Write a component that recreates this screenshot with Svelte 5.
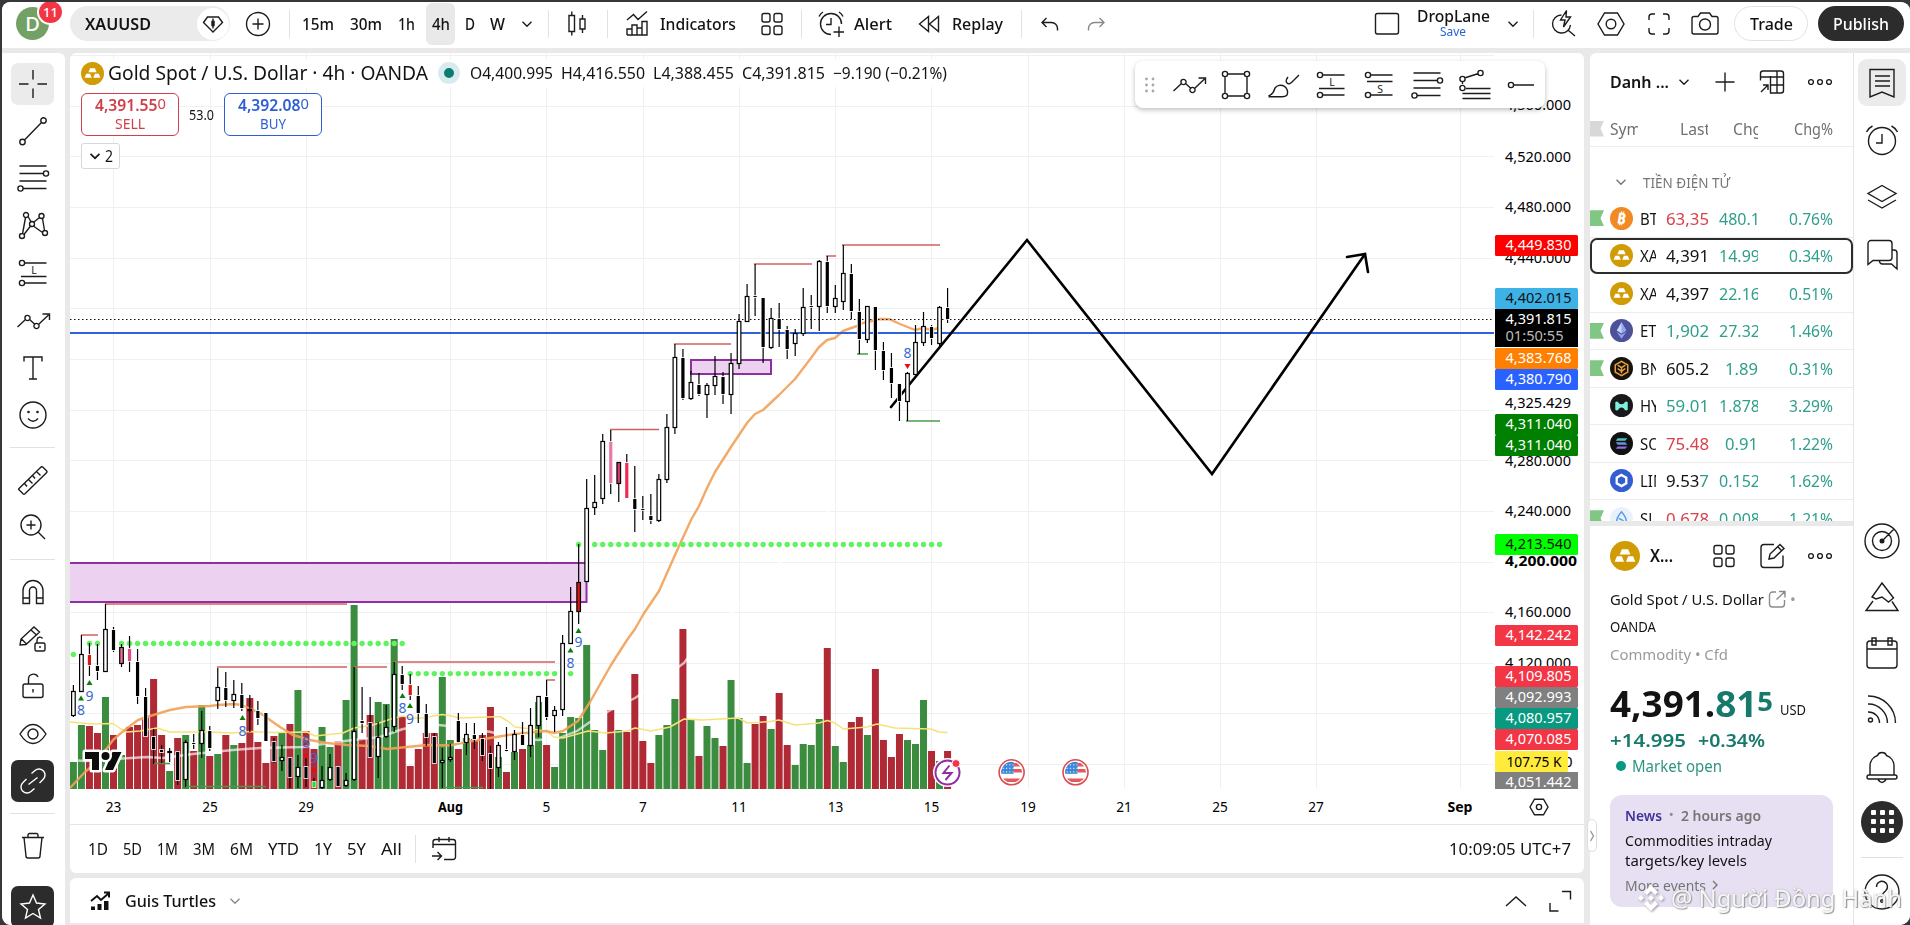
<script>
  // squeeze or stretch a label to the given width
  function fit(node, width) {
    const natural = node.getBoundingClientRect().width;
    if (!natural) return;
    node.style.transform = `scaleX(${width / natural})`;
    node.style.marginRight = `${width - natural}px`;
  }

  const c = (x, y, r) => `M${x - r} ${y}a${r} ${r} 0 1 0 ${2 * r} 0a${r} ${r} 0 1 0 ${-2 * r} 0`;
  const rr = (x, y, w, h, r) =>
    `M${x + r} ${y}h${w - 2 * r}a${r} ${r} 0 0 1 ${r} ${r}v${h - 2 * r}a${r} ${r} 0 0 1 ${-r} ${r}h${-(w - 2 * r)}a${r} ${r} 0 0 1 ${-r} ${-r}v${-(h - 2 * r)}a${r} ${r} 0 0 1 ${r} ${-r}z`;

  // all icons are centred on 0,0
  const icons = {
    plusCircle: c(0, 0, 11.5) + 'M-5.5 0h11M0-5.5v11',
    diamond: 'M-5.5-7h11l4 5.5-9.5 9.5-9.5-9.5z M0-5.5v10 M-1-2.5h2v4h-2z',
    chev: 'M-4.5-2.2l4.5 4.4 4.5-4.4',
    up: 'M-10 5l10-9 10 9',
    candles: 'M-8-8.5h5.5v16h-5.5zM-5.2-12.5v4M-5.2 7.5v4M3-5h5v10h-5zM5.5-9v4M5.5 5v4',
    indicators: 'M-10-4l6.5-5.5 4.5 5 9-8M-10 11V5h5M-5 11V1h5v10M0 4h5M5 11V-2.500h5v13.500zM-10 11h20M5 4v7',
    grid: rr(-10, -10.5, 8, 8.5, 2) + rr(2, -10.5, 8, 8.5, 2) + rr(-10, 2, 8, 8.5, 2) + rr(2, 2, 8, 8.5, 2),
    alert: 'M0 10.500A10.500 10.500 0 1 1 10.500 0M0-6v6.500h-5M8 2.500v10.500M2.500 8h10.500M-12-7.500q1.500-3 4-4.500M12-7.500q-1.500-3-4-4.500',
    replay: 'M-.5-7.500v15l-9-7.500zM9.500-7.500v15l-9-7.500z',
    undo: 'M-3.500-6l-4.500 4.500 4.500 4.500M-8-1.500H1.500a6 6 0 0 1 6 6v2',
    redo: 'M3.500-6l4.500 4.500-4.500 4.500M8-1.500H-1.500a6 6 0 0 0-6 6v2',
    square: rr(-11.5, -10.5, 23, 20.5, 2),
    search: 'M-1.500-9a9 9 0 1 0 9 10M5.500 6.500l6.500 5.500M3.500-13.500l-6 9.500h4.500l-1.500 7 7-10h-4.500z',
    hex: 'M-6.500-11h13l6.500 11-6.500 11h-13l-6.500-11z' + c(0, 0, 4.8),
    hexSmall: 'M-4.500-7.800h9l4.500 7.800-4.500 7.800h-9l-4.500-7.800z' + c(0, 0, 2.6),
    full: 'M-10-4v-3a3 3 0 0 1 3-3h3M4-10h3a3 3 0 0 1 3 3v3M10 4v3a3 3 0 0 1-3 3h-3M-4 10h-3a3 3 0 0 1-3-3v-3',
    camera: 'M-13-5.500a2 2 0 0 1 2-2h4l2.500-3.500h9l2.500 3.500h4a2 2 0 0 1 2 2v13.500a2 2 0 0 1-2 2h-22a2 2 0 0 1-2-2z' + c(0, 0.5, 5.5),
    plus: 'M-9.500 0h19M0-9.500v19',
    table: 'M-11.500-1.500v-7a2.500 2.500 0 0 1 2.500-2.500h18a2.500 2.500 0 0 1 2.500 2.500v17a2.500 2.500 0 0 1-2.500 2.500h-10.500v-17M-11.500-5h23M5-11v22M-1.500 3h13M-11 10l7-7M-9 3h5v5',
    dots: c(-9, 0, 2.4) + c(0, 0, 2.4) + c(9, 0, 2.4),
    cross: 'M0-14v9.500M0 4.500v9.500M-14 0h9.500M4.500 0h9.500',
    trend: c(-10.5, 11, 2.7) + c(10.5, -10.5, 2.7) + 'M-8.500 9l17-17.500',
    fib: 'M-13.500-12h27M-13.500-4.500h24M-13.500 3h27M-10 10.500h23.500' + c(13, -4.5, 2.6) + c(-12.5, 10.5, 2.6),
    pattern: 'M-10.500 8l3-16.500M-5-9.500l3.500 6M1-4l5.500-4.500M9.500-7.500l2 12M-9 8.500l6.500-8.500M1 .5l8.500 6' + c(-11, 10, 2.5) + c(-7, -11, 2.5) + c(-1, -2, 2.5) + c(8.5, -10, 2.5) + c(12, 7, 2.5),
    long: 'M-8.500-10h22M-12 3.500h25.500M-8.500 10h22' + c(-11, -10, 2.6) + c(-11, 10, 2.6),
    short: 'M-8.500-10h22M-12-3.500h25.500M-8.500 10h22' + c(-11, -10, 2.6) + c(-11, 10, 2.6),
    path: 'M-15.500 6l8-7.500M-3.500-1.500l5 4.500M6 3l9.500-9M9.500-7h7v6' + c(-5.5, -3, 2.6) + c(3.5, 5, 2.6),
    text: 'M-9-6.500v-4.500h18v4.500M0-11v22M-4 11h8',
    smile: c(0, 0, 13) + 'M-5 3.500q5 5.500 10 0',
    ruler: 'M-14 8.500l22-21.500q1-.5 2 .3l3.500 3.500q1 1 0 2l-21.500 21q-1 .8-2 0l-4-4q-.8-.6 0-1.300zM-8.500 3.500l2.500 3M-4.500-.5l4 4M-.5-4.500l2.500 3M3.500-8.500l4 4',
    zoom: c(-2, -2, 10) + 'M5.500 5.500l6.500 6.500M-6.500-2h9M-2-6.500v9',
    magnet: 'M-10 11.500v-13a10 10 0 0 1 20 0v13h-6.500v-13a3.500 3.500 0 0 0-7 0v13zM-10 6h6.500M3.500 6h6.500',
    pencilLock: 'M-13 6l1-6 13-12 5.500 5-13.500 12.500zM-2-9l5.500 5M-11.500 0l5 5' + rr(2, 4, 10, 8, 1.5) + 'M4 4v-3a3 3 0 0 1 5.500-1.500M7 7v2',
    lock: rr(-10, -2, 20, 13.5, 2) + 'M-4.500-2v-4.500a5 5 0 0 1 9.500-2.500M0 3v3.500',
    eye: 'M-13 0q6-9.500 13-9.500t13 9.500q-6 9.500-13 9.500t-13-9.500z' + c(0, 0, 5),
    link: 'M-4.500 3.500l9-7M-1.500-7.500l3.500-3a6 6 0 0 1 8 9l-3.500 3.500M1.500 7.500l-3.500 3a6 6 0 0 1-8-9l3.500-3.500',
    trash: 'M-11-8.500h22M-5-8.500v-2.500a1.500 1.500 0 0 1 1.500-1.500h7a1.500 1.500 0 0 1 1.500 1.500v2.500M-9-8.500l2 18.500a2 2 0 0 0 2 2h10a2 2 0 0 0 2-2l2-18.500',
    star: 'M0-12l3.500 8 8.500 1-6.500 5.500 2 8.500-7.500-4.500-7.500 4.500 2-8.500-6.500-5.500 8.500-1z',
    rect: 'M-8-11h16M-8 11h16M-11-8v16M11-8v16' + c(-11, -11, 2.6) + c(11, -11, 2.6) + c(-11, 11, 2.6) + c(11, 11, 2.6),
    brush: 'M-15.500 11q5-2 6.500-8a7 7 0 0 1 12 7q-1.500 1.800-5 1.800h-13.500M15-10l-7 7q-3 3-5 1t1-6',
    fibExt: 'M-11.500-4v3M-9.500-7l14-4.500M-8 3.500h24.500M-11.500 8.500h28M-11.500 13.500h28' + c(-11.5, -6, 2.6) + c(6.5, -12, 2.6) + c(-11.5, 3, 2.6),
    hray: c(-11, 0, 2.6) + 'M-8 0h20',
    bookmark: 'M-12-13.500h24v27.500l-12-5-12 5zM-7-7h15M-7-2h15M-7 3h15',
    clock: c(0, 1, 13.5) + 'M0-6v9h-6M-15.500-8q2-4 6-6M15.500-8q-2-4-6-6',
    layers: 'M0-11.500l14 8-14 8-14-8zM-14 3l14 8 14-8',
    chat: 'M-14 10.500v-21a3 3 0 0 1 3-3h18a3 3 0 0 1 3 3v14a3 3 0 0 1-3 3h-16zM10-4h2a3 3 0 0 1 3 3v16l-5.500-5h-9a3 3 0 0 1-3-3.500',
    radar: c(0, 0, 17) + c(0, 0, 9.5) + 'M0 0l12-12M-1-1h2v2h-2z',
    mountain: 'M0-14l11.500 15-5 4-6.500-5-6 2-4-2zM-9 4l-7 9.500h32l-6-9',
    calendar: rr(-15, -12, 30, 27, 3) + 'M-15-4h30M-10-15h4v7h-4zM6-15h4v7h-4z',
    rss: c(-11.5, 11, 2) + 'M-14 3a11 11 0 0 1 11.500 11M-14-5a19 19 0 0 1 19.500 19M-14-13a27 27 0 0 1 27.500 27',
    bell: 'M-12 9v-9a11 11 0 0 1 7.500-10.500q1-3 4.500-3t4.500 3a11 11 0 0 1 7.500 10.500v9' + rr(-15, 9, 30, 4, 2) + 'M-4 13.500q4 6 8 0',
    help: c(0, 0, 17) + 'M-5.500-5a5.500 5.500 0 1 1 9 4q-3.500 2.500-3.500 6' + c(0, 9, 1.3),
    edit: 'M2-11.500h-10a3 3 0 0 0-3 3v17a3 3 0 0 0 3 3h16a3 3 0 0 0 3-3v-9M-3 3l1-5 10-9.500 4 4-10 9.500zM6-9l4 4',
    external: 'M-1-7h-3.500a3 3 0 0 0-3 3v9a3 3 0 0 0 3 3h9a3 3 0 0 0 3-3v-4M2-7.500h6v6M8-7.500l-8.500 8',
    goto: 'M-11-1v-6a2.500 2.500 0 0 1 2.500-2.500h17.500a2.500 2.500 0 0 1 2.500 2.500v15a2.500 2.500 0 0 1-2.500 2.500h-9M-11-4.500h22.500M-5-12v5M5-12v5M-12 7h9M-6.500 3l4 4-4 4',
    expand: 'M2-9.500h8.500v8M-10 2v8h8.500',
    handle: 'M-1.500-5l3 5-3 5'
  };

  const leftTop = ['trend', 'fib', 'pattern', 'long', 'path', 'text', 'smile'];
  const floatTools = ['path', 'rect', 'brush', 'long', 'short', 'fib', 'fibExt', 'hray'];
  const ranges = [['1D', 20], ['5D', 19], ['1M', 21], ['3M', 22], ['6M', 23], ['YTD', 31], ['1Y', 18], ['5Y', 19], ['All', 21]];

  const coins = [
    { sym: 'BTC', last: '63,35', chg: '480.1', pct: '0.76%', dir: 'red', coin: 'btc', flag: true },
    { sym: 'XAU', last: '4,391', chg: '14.99', pct: '0.34%', dir: '', coin: 'gold', active: true },
    { sym: 'XAU', last: '4,397', chg: '22.16', pct: '0.51%', dir: '', coin: 'gold' },
    { sym: 'ETH', last: '1,902', chg: '27.32', pct: '1.46%', dir: 'green', coin: 'eth', flag: true },
    { sym: 'BNB', last: '605.2', chg: '1.89', pct: '0.31%', dir: '', coin: 'bnb', flag: true },
    { sym: 'HYP', last: '59.01', chg: '1.878', pct: '3.29%', dir: 'green', coin: 'hype' },
    { sym: 'SOL', last: '75.48', chg: '0.91', pct: '1.22%', dir: 'red', coin: 'sol' },
    { sym: 'LINK', last: '9.53', tail: '7', chg: '0.152', pct: '1.62%', dir: '', coin: 'link' },
    { sym: 'SUI', last: '0.678', chg: '0.008', pct: '1.21%', dir: 'red', coin: 'sui', flag: true }
  ];

  // chart
  const bx = (i) => 73.4 + 8.02 * i;
  const base = 789;

  // positive = up bar, negative = down bar
  const volumes = [
    27, 64, -63, -56, 92, -54, 34, -62, -64, -72, -110, -54, 18, -51, 54, -38, 84, -33, 35, -54,
    44, -46, -91, -47, -26, -53, 57, -65, 99, -58, -40, 62, 42, -48, 89, 184, -50, -74, 87, 85,
    150, -73, -23, -40, -56, -56, 112, 49, -40, 51, -50, -54, -82, 32, -17, 37, -40, 44, 87, -44,
    22, 56, 72, 71, 144, 59, 39, -79, 59, -57, -115, -48, -26, 54, 64, 90, -160, 69, -33, 63,
    51, -43, 109, 71, 26, -65, -73, 60, -96, -44, 24, 45, 44, 70, -141, 43, 27, -67, -72, 54,
    -120, -49, -32, -55, 49, 45, 89, -38, 28, -38
  ];

  // high, body top, body bottom, low, kind
  const candles = [
    [685, 691, 716, 717, 'w'], [635, 654, 692, 692, 'w'], [643, 655, 665, 676, 'r'], [644, 666, 671, 680, 'b'],
    [604, 629, 672, 672, 'w'], [627, 630, 650, 652, 'b'], [644, 647, 664, 667, 'po'], [636, 649, 661, 672, 'm'],
    [649, 662, 696, 704, 'b'], [688, 697, 736, 737, 'b'], [729, 737, 749, 764, 'b'], [745, 750, 752, 763, 'b'],
    [748, 751, 753, 762, 'w'], [751, 752, 780, 785, 'b'], [740, 742, 780, 787, 'w'], [734, 743, 744, 749, 'b'],
    [711, 730, 744, 758, 'w'], [726, 731, 748, 751, 'b'], [668, 687, 701, 709, 'w'], [672, 688, 700, 707, 'b'],
    [680, 694, 701, 708, 'w'], [683, 695, 708, 711, 'b'], [695, 709, 710, 732, 'w'], [701, 711, 718, 725, 'b'],
    [713, 713, 741, 741, 'b'], [738, 742, 761, 763, 'b'], [745, 757, 761, 771, 'w'], [757, 758, 777, 788, 'b'],
    [755, 767, 777, 788, 'w'], [758, 767, 778, 787, 'b'], [778, 782, 787, 788, 'g'], [766, 780, 788, 789, 'w'],
    [754, 767, 780, 781, 'w'], [766, 767, 786, 787, 'b'], [773, 780, 786, 787, 'w'], [667, 731, 780, 781, 'w'],
    [687, 721, 723, 733, 'b'], [697, 723, 757, 758, 'b'], [722, 737, 757, 778, 'w'], [705, 727, 737, 738, 'w'],
    [662, 674, 727, 732, 'w'], [666, 675, 684, 690, 'b'], [674, 685, 695, 700, 'r'], [686, 696, 713, 723, 'b'],
    [704, 714, 737, 746, 'b'], [733, 737, 763, 764, 'b'], [748, 760, 763, 788, 'w'], [744, 757, 760, 762, 'w'],
    [713, 721, 742, 743, 'b'], [723, 734, 743, 755, 'w'], [723, 735, 739, 749, 'b'], [733, 739, 755, 761, 'b'],
    [746, 754, 768, 789, 'b'], [742, 745, 768, 777, 'w'], [727, 750, 751, 752, 'b'], [730, 734, 752, 760, 'w'],
    [722, 735, 745, 745, 'b'], [708, 725, 746, 757, 'w'], [696, 696, 726, 737, 'w'], [680, 697, 717, 720, 'b'],
    [706, 710, 716, 732, 'w'], [635, 643, 710, 716, 'w'], [587, 611, 644, 644, 'w'], [544, 582, 612, 624, 'ro'],
    [479, 508, 582, 582, 'w'], [475, 502, 508, 515, 'w'], [434, 441, 499, 504, 'w'], [430, 442, 483, 494, 'p'],
    [462, 462, 484, 502, 'mo'], [454, 463, 498, 498, 'mr'], [466, 499, 509, 532, 'b'], [496, 509, 510, 520, 'b'],
    [494, 516, 520, 524, 'b'], [474, 479, 521, 522, 'w'], [414, 427, 480, 483, 'w'], [344, 357, 428, 434, 'w'],
    [349, 358, 398, 400, 'b'], [371, 382, 399, 400, 'w'], [373, 385, 394, 396, 'b'], [383, 385, 395, 418, 'w'],
    [356, 376, 386, 395, 'w'], [372, 377, 394, 404, 'b'], [353, 363, 395, 414, 'w'], [314, 321, 364, 369, 'w'],
    [284, 296, 322, 322, 'w'], [264, 296, 297, 316, 'b'], [298, 298, 347, 363, 'b'], [308, 318, 348, 349, 'w'],
    [303, 319, 329, 347, 'b'], [326, 330, 349, 359, 'b'], [329, 333, 344, 356, 'w'], [288, 307, 334, 336, 'w'],
    [295, 306, 307, 329, 'b'], [260, 261, 307, 331, 'w'], [256, 262, 306, 313, 'b'], [285, 298, 307, 313, 'w'],
    [245, 273, 302, 310, 'w'], [264, 274, 311, 319, 'b'], [299, 312, 339, 354, 'b'], [306, 306, 340, 343, 'w'],
    [307, 307, 350, 370, 'b'], [342, 351, 370, 380, 'b'], [353, 368, 383, 398, 'b'], [384, 384, 401, 421, 'b'],
    [372, 373, 402, 421, 'w'], [325, 342, 375, 375, 'w'], [312, 326, 343, 346, 'w'], [325, 327, 338, 345, 'b'],
    [306, 307, 344, 346, 'w'], [288, 308, 319, 323, 'b']
  ];
  const fills = { r: '#d81717', ro: '#d81717', po: '#e8729c', p: '#ea78a8', m: '#dd4c84', mo: '#d8386f', mr: '#ee2b50', g: '#1fe01f', w: '#fff', b: '#000' };
  const outlined = ['w', 'ro', 'po', 'mo'];

  const redLines = [
    [81, 98, 635], [105, 347, 604], [217, 347, 667], [354, 387, 667], [394, 555, 662], [546, 555, 680],
    [610, 659, 429.5], [674, 731, 344], [754, 812, 264], [826, 836, 256], [842, 940, 245]
  ];
  const greenLines = [[154, 170, 763.5], [186, 266, 786.5], [443, 483, 787.5], [857, 868, 354], [906, 940, 421]];

  const span = (a, b) => Array.from({ length: b - a + 1 }, (_, k) => a + k);
  const dots = [
    [0, 654.5], [2, 643.5], [3, 643.5],
    ...span(6, 41).map((i) => [i, 643.5]),
    ...span(42, 60).map((i) => [i, 673.6]), [62, 673.6],
    [63, 544.5], ...span(65, 108).map((i) => [i, 544.5])
  ];

  const marks = [
    [81, 710, '8', 698, 1], [89.5, 696, '9', 682.5, 1], [242.5, 731, '8', 717.5, 1], [306, 742, '8', 756, 0],
    [314, 758, '9', 770.5, 0], [402.5, 708, '8', 695.5, 1], [410, 719, '9', 705.5, 1], [570.5, 663, '8', 650, 1],
    [578.5, 642, '9', 630.5, 1], [907.5, 353, '8', 366, 0]
  ];

  const orange = '70,788 85,772 97,762 113,740 121,733 130,726 138,720 150,716 170,710 186,707 210,706 218,705 234,704 242,705 260,713 270,720 280,727 293,735 310,740 327,743 347,745 370,746 387,749 407,747 427,745 450,745.500 466,742 490,738 515,734 546,731 554,733 563,731 578,721 590,702 611,665 627,640 635,629 643.500,614 659,591 675,555 691,520 699,506 707,488 715,472 731,447 747,423 755,414 763,410 779,395 795,379 811,358 819,347 827,340 835,338 843,331 857,326 863,323 880,319 890,319.300 900,324 915,330 923,328 931,330 939,328';
  const yellow = '70,722 93,724 113,723.500 121,729 127,732 140,731 157,728 170,732 207,732 233,733 250,731.500 273,732.500 307,732 315,736 343,733 354,728 373,725 394,718 403,716 410,718 423,718 442,714.500 452,716 459,718 488,717 500,716.500 507.500,721 515,727 531,729 546,731 554,737 563,738 588,731 606,733 627,731 635,728 651,731 670,727 684,719 702,720 738,718 747.500,723 770,721.500 779,720 795,725 819,723 827.500,720.500 835,723 843.500,729 867,727 877,724 895,728 931,729 939,732 947.500,732.500';
  const white = '70,760 85,761 123,758.500 147,757 163,758 193,754 233,750 260,748 303,747 337,742 353,740 380,737 403,729 427,725 438,725 459,727 491,732 513,738 538,740 559,738 577,731 590,722 609,711 635,698 641,694 684,663 692,652 733,612 780,562 835,505';

  const vgrid = [[113.5, '23'], [210, '25'], [306, '29'], [450.5, 'Aug'], [546.5, '5'], [643, '7'], [739, '11'], [835.5, '13'], [931.5, '15'], [1028, '19'], [1124, '21'], [1220, '25'], [1316, '27'], [1460, 'Sep']];
  const hgrid = span(0, 14).map((k) => 55.7 + 50.63 * k);
  const ticks = [
    [104.5, '4,560.000'], [156, '4,520.000'], [206.5, '4,480.000'], [257, '4,440.000'], [460, '4,280.000'],
    [510, '4,240.000'], [611, '4,160.000'], [662, '4,120.000'], [402.500, '4,325.429']
  ];

  const tags = [
    [235, '4,449.830', '#ff0000', '#fff'], [288, '4,402.015', '#3db2e6', '#111'], [348, '4,383.768', '#ff8000', '#fff'],
    [369, '4,380.790', '#2962ff', '#fff'], [414, '4,311.040', '#008000', '#fff'], [435, '4,311.040', '#008000', '#fff'],
    [534, '4,213.540', '#00ff00', '#111'], [625, '4,142.242', '#f23645', '#fff'], [666, '4,109.805', '#f23645', '#fff'],
    [687, '4,092.993', '#808080', '#fff'], [708, '4,080.957', '#089981', '#fff'], [729, '4,070.085', '#f23645', '#fff']
  ];
</script>

{#snippet ico(name, label = '')}
  <svg class="ico" width="28" height="28" viewBox="-14 -14 28 28">
    <path d={icons[name]} />
    {#if label}<text x="1" y={label === 'L' ? 1 : 7.5} font-size="10.5" text-anchor="middle">{label}</text>{/if}
    {#if name === 'smile'}<circle class="dot" cx="-4.500" cy="-3" r="1.300" /><circle class="dot" cx="4.500" cy="-3" r="1.300" />{/if}
    {#if name === 'radar'}<circle class="dot" r="2.500" />{/if}
  </svg>
{/snippet}

{#snippet coin(kind, size)}
  <svg class="coin" width={size} height={size} viewBox="-12 -12 24 24">
    {#if kind === 'gold'}
      <circle r="12" fill="#d19b05" />
      <path fill="#fff" d="M-2.500-5.500h5l1.800 4.300h-8.600zM-6.500.2h4l1.700 4.300h-7.500zM2.500.2h4l1.800 4.300h-7.500z" />
    {:else if kind === 'btc'}
      <circle r="12" fill="#f18a22" />
      <text y="5.500" text-anchor="middle" font-size="16" font-weight="700" fill="#fff" transform="rotate(10)">₿</text>
    {:else if kind === 'eth'}
      <circle r="12" fill="#4c5199" />
      <path fill="#c9d4fb" d="M0-8.500l5 8.500-5 3-5-3z" /><path fill="#8fa3ee" d="M0-8.500l5 8.500-5 3zM-5 1.500l5 3 5-3-5 7z" />
    {:else if kind === 'bnb'}
      <circle r="12" fill="#16130f" />
      <path fill="none" stroke="#e9a13b" stroke-width="1.600" d="M0-7.500l6.500 3.700v7.500l-6.500 3.700-6.500-3.700v-7.500zM-4-3.500l4 2.500 4-2.500M0-1v6M-4 0l4 3 4-3" />
    {:else if kind === 'hype'}
      <circle r="12" fill="#17191a" />
      <path fill="#7ff0dd" d="M-6.500-3.500q2.500-2 4 1.500q2.500 1.500 5 0q1.500-3.500 4-1.500v8q-2.500 2-4-1.500q-2.500-2-5 0q-1.500 3.500-4 1.500z" />
    {:else if kind === 'sol'}
      <circle r="12" fill="#111" />
      <path fill="#4fc4b4" d="M-4-5.500h10l-2 2.500h-10z" /><path fill="#6b8fe0" d="M-6-1.200h10l2 2.500h-10z" /><path fill="#8f6be8" d="M-4 3h10l-2 2.500h-10z" />
    {:else if kind === 'link'}
      <circle r="12" fill="#335dd2" />
      <path fill="none" stroke="#fff" stroke-width="2.400" d="M0-5.800l5 2.900v5.800l-5 2.900-5-2.900v-5.800z" />
    {:else}
      <circle r="12" fill="#e9f2fc" />
      <path fill="none" stroke="#5a9bee" stroke-width="1.500" d="M0-7q5 6 5 9.500a5 5 0 0 1-10 0q0-3.500 5-9.500zM-3 0q5 1 6 5" />
    {/if}
  </svg>
{/snippet}

<div class="app">
  <header>
    <div class="avatar">D<span class="badge">11</span></div>
    <div class="symbol"><b class="t" use:fit={66}>XAUUSD</b><span class="round">{@render ico('diamond')}</span></div>
    {@render ico('plusCircle')}
    <i class="sep"></i>
    <span class="t" use:fit={32}>15m</span>
    <span class="t" use:fit={32}>30m</span>
    <span class="t" use:fit={17}>1h</span>
    <span class="interval"><span class="t" use:fit={18}>4h</span></span>
    <span class="t" use:fit={10}>D</span>
    <span class="t" use:fit={15}>W</span>
    <span class="chev">{@render ico('chev')}</span>
    <i class="sep"></i>
    {@render ico('candles')}
    <i class="sep"></i>
    {@render ico('indicators')}
    <span class="t" use:fit={76}>Indicators</span>
    {@render ico('grid')}
    <i class="sep"></i>
    {@render ico('alert')}
    <span class="t" use:fit={38}>Alert</span>
    {@render ico('replay')}
    <span class="t" use:fit={51}>Replay</span>
    <i class="sep"></i>
    {@render ico('undo')}
    <span class="muted">{@render ico('redo')}</span>
    {@render ico('square')}
    <div class="layout-name">
      <span class="t" use:fit={73}>DropLane</span>
      <span class="t save" use:fit={26}>Save</span>
    </div>
    <span class="chev">{@render ico('chev')}</span>
    <i class="sep"></i>
    {@render ico('search')}
    {@render ico('hex')}
    {@render ico('full')}
    {@render ico('camera')}
    <button class="pill trade"><span class="t" use:fit={43}>Trade</span></button>
    <button class="pill publish"><span class="t" use:fit={56}>Publish</span></button>
  </header>

  <div class="body">
    <nav class="tools">
      <div class="slot"><span class="hit on">{@render ico('cross')}</span></div>
      {#each leftTop as name}
        <div class="slot">{@render ico(name, name === 'long' ? 'L' : '')}</div>
      {/each}
      <hr />
      <div class="slot">{@render ico('ruler')}</div>
      <div class="slot">{@render ico('zoom')}</div>
      <hr />
      <div class="slot">{@render ico('magnet')}</div>
      <div class="slot">{@render ico('pencilLock')}</div>
      <div class="slot">{@render ico('lock')}</div>
      <div class="slot">{@render ico('eye')}</div>
      <div class="slot"><span class="hit dark">{@render ico('link')}</span></div>
      <hr />
      <div class="slot">{@render ico('trash')}</div>
      <div class="slot last"><span class="hit dark">{@render ico('star')}</span></div>
    </nav>

    <main>
      <section class="chart">
        <svg class="plot" width="1514" height="771" viewBox="70 53 1514 771">
          <defs>
            <clipPath id="pane"><rect x="70" y="53" width="1424" height="736" /></clipPath>
            <clipPath id="axis"><rect x="1494" y="53" width="90" height="736" /></clipPath>
            <clipPath id="flag"><circle r="10.500" /></clipPath>
          </defs>

          <g clip-path="url(#pane)">
            <path class="gridline" d={vgrid.map(([x]) => `M${Math.floor(x) + 0.5} 53V789`).join('') + hgrid.map((y) => `M70 ${Math.floor(y) + 0.5}H1494`).join('')} />

            {#each volumes as v, i}
              <rect x={bx(i) - 3.5} y={base - Math.abs(v)} width="7" height={Math.abs(v)} fill={v > 0 ? '#3c8c40' : '#b02a36'} />
            {/each}

            <rect class="zone" x="60" y="563" width="526.500" height="39" />
            <rect class="zone" x="691" y="360" width="80" height="14" />

            <polyline class="ma" points={white} stroke="#fff" stroke-opacity=".65" />
            <polyline class="ma thin" points={yellow} stroke="#f6e27a" />
            <polyline class="ma" points={orange} stroke="#f2a158" stroke-opacity=".9" />

            <path d="M70 333H1494" stroke="#2f62dc" stroke-width="2" />
            <path d="M70 319.500H1494" stroke="#111" stroke-dasharray="1.500 2.500" />

            {#each redLines as [x1, x2, y]}<path d={`M${x1} ${y}H${x2}`} stroke="#d0605f" stroke-width="1.500" />{/each}
            {#each greenLines as [x1, x2, y]}<path d={`M${x1} ${y}H${x2}`} stroke="#4b9a4b" stroke-width="1.500" />{/each}
            {#each dots as [i, y]}<circle cx={bx(i)} cy={y} r="2.700" fill="#5ff45f" />{/each}

            <polyline class="draw" points="891,407 1027,240 1212,474 1365,254" />
            <polyline class="draw" points="1347,257 1365,254 1368,272" />

            {#each candles as [h, top, bot, l, kind], i}
              {@const x = bx(i)}
              {#if outlined.includes(kind)}
                <path d={`M${x} ${h}V${top}M${x} ${bot}V${l}`} stroke="#000" stroke-width="1.200" />
                <rect x={x - 1.8} y={top + 0.5} width="3.600" height={Math.max(1, bot - top - 1)} fill={fills[kind]} stroke="#000" stroke-width="1.200" />
              {:else}
                <path d={`M${x} ${h}V${l}`} stroke="#000" stroke-width="1.200" />
                <rect x={x - 1.6} y={top} width="3.200" height={Math.max(1, bot - top)} fill={fills[kind]} stroke="#fff" stroke-width="1.600" paint-order="stroke" />
              {/if}
            {/each}

            {#each marks as [x, y, label, ty, isUp]}
              <text class="mark" {x} y={y + 5} textLength="8" lengthAdjust="spacingAndGlyphs">{label}</text>
              {#if isUp}
                <path d={`M${x - 3} ${ty + 2.5}h6l-3-5z`} fill="#0a7d0a" />
              {:else}
                <path d={`M${x - 3} ${ty - 2}h6l-3 5z`} fill="#e01010" />
              {/if}
            {/each}

            <g class="logo" transform="translate(85 748)">
              <path d="M14 22H7V11H0V4h14zM28 22h-8l7.500-18h9z" />
              <circle cx="20.500" cy="8" r="4" />
            </g>

            <g transform="translate(947.500 772.500)">
              <circle r="14.500" fill="#fff" />
              <circle r="12" fill="#fff" stroke="#8e2fa5" stroke-width="2" />
              <path d="M2-7l-6 7.500h8l-6 7" fill="none" stroke="#8e2fa5" stroke-width="2" />
              <circle cx="8.500" cy="-9" r="4" fill="#f23645" stroke="#fff" />
            </g>
            {#each [1011.6, 1075.5] as x}
              <g transform={`translate(${x} 772.300)`}>
                <circle r="12.500" fill="#fff" stroke="#dd4a50" stroke-width="1.600" />
                <g clip-path="url(#flag)">
                  <path d="M-11-7.500h22M-11-1.500h22M-11 8h22" stroke="#e25a5e" stroke-width="3.500" />
                  <rect x="-11" y="-11" width="13" height="12.500" fill="#3d86d8" />
                  <path d="M-9-7.500h11M-9-4h11M-9-.5h11" stroke="#cfe4fa" stroke-width="1.200" stroke-dasharray="1.300 2" />
                </g>
              </g>
            {/each}
          </g>

          <g class="prices" clip-path="url(#axis)">
            {#each ticks as [y, label]}
              <text x="1505" {y} dy="5.500" textLength="66" lengthAdjust="spacingAndGlyphs">{label}</text>
            {/each}
            <text class="bold" x="1505" y="566" textLength="72" lengthAdjust="spacingAndGlyphs">4,200.000</text>
            <text x="1564" y="766.500">0</text>
            {#each tags as [y, label, bg, fg]}
              <rect x="1495" {y} width="83" height="21" rx="1.500" fill={bg} />
              <text x="1505.500" y={y + 15} fill={fg} textLength="66" lengthAdjust="spacingAndGlyphs">{label}</text>
            {/each}
            <rect x="1495" y="309" width="83" height="38" fill="#000" />
            <text x="1505.500" y="324" fill="#fff" textLength="66" lengthAdjust="spacingAndGlyphs">4,391.815</text>
            <text x="1505.500" y="341" fill="#bbb" textLength="58" lengthAdjust="spacingAndGlyphs">01:50:55</text>
            <rect x="1495" y="751" width="73" height="21" rx="1.500" fill="#ffeb3b" />
            <text x="1506.500" y="766.500" textLength="55" lengthAdjust="spacingAndGlyphs">107.75 K</text>
            <rect x="1495" y="772" width="83" height="21" fill="#808080" />
            <text x="1505.500" y="787" fill="#fff" textLength="66" lengthAdjust="spacingAndGlyphs">4,051.442</text>
          </g>

          <g class="times">
            {#each vgrid as [x, label]}
              {#if label.length === 3}
                <text class="bold" {x} y="812" textLength="25" lengthAdjust="spacingAndGlyphs">{label}</text>
              {:else}
                <text {x} y="812" textLength={label.length * 7.8} lengthAdjust="spacingAndGlyphs">{label}</text>
              {/if}
            {/each}
          </g>
          <path class="cog" transform="translate(1539 807)" d={icons.hexSmall} />
        </svg>

        <div class="legend">
          <div class="title">
            {@render coin('gold', 23)}
            <span class="t name" use:fit={320}>Gold Spot / U.S. Dollar · 4h · OANDA</span>
            <span class="status"></span>
            <span class="t" use:fit={83}>O4,400.995</span>
            <span class="t" use:fit={84}>H4,416.550</span>
            <span class="t" use:fit={81}>L4,388.455</span>
            <span class="t" use:fit={83}>C4,391.815</span>
            <span class="t" use:fit={114}>−9.190 (−0.21%)</span>
          </div>
          <div class="trade-row">
            <div class="quote sell"><b class="t" use:fit={71}>4,391.55<sup>0</sup></b><span class="t" use:fit={30}>SELL</span></div>
            <span class="t spread" use:fit={25}>53.0</span>
            <div class="quote buy"><b class="t" use:fit={71}>4,392.08<sup>0</sup></b><span class="t" use:fit={26}>BUY</span></div>
          </div>
          <div class="collapsed">{@render ico('chev')}<span class="t" use:fit={8}>2</span></div>
        </div>

        <div class="ranges">
          {#each ranges as [label, w]}<span class="t" use:fit={w}>{label}</span>{/each}
          <i class="sep"></i>
          {@render ico('goto')}
          <span class="t clock" use:fit={122}>10:09:05 UTC+7</span>
        </div>
      </section>

      <section class="bottom">
        <svg class="strategy" width="20" height="20" viewBox="0 0 20 20">
          <path d="M1 19v-3.500h4v3.500zM7.500 19v-6h4v6zM14 19v-9h4.500v9z" fill="#111" />
          <path d="M1 10l6-5 4 4 8-7M14 1.500h5v5" fill="none" stroke="#111" stroke-width="2" />
        </svg>
        <span class="t" use:fit={91}>Guis Turtles</span>
        <span class="muted">{@render ico('chev')}</span>
        <span class="right">{@render ico('up')}{@render ico('expand')}</span>
      </section>

      <div class="floating">
        <svg class="grip" width="10" height="16" viewBox="0 0 10 16">
          {#each [1.5, 8] as x}{#each [2, 8, 14] as y}<circle cx={x} cy={y} r="1.400" />{/each}{/each}
        </svg>
        {#each floatTools as name}
          {@render ico(name, name === 'long' ? 'L' : name === 'short' ? 'S' : '')}
        {/each}
      </div>
    </main>

    <aside class="side">
      <section class="watch">
        <div class="watch-head">
          <b class="t" use:fit={59}>Danh ...</b>
          {@render ico('chev')}
          {@render ico('plus')}
          {@render ico('table')}
          {@render ico('dots')}
        </div>
        <div class="row cols">
          <span class="flag grey"></span>
          <span class="sym-head"><span class="t">Symbol</span></span>
          <span class="last"><span class="t">Last</span></span>
          <span class="chg"><span class="t">Chg</span></span>
          <span class="pct"><span class="t" use:fit={39}>Chg%</span></span>
        </div>
        <div class="group">{@render ico('chev')}<span class="t" use:fit={87}>TIỀN ĐIỆN TỬ</span></div>
        {#each coins as r}
          <div class="row" class:active={r.active}>
            <span class="flag" class:green={r.flag}></span>
            <span>{@render coin(r.coin, 23)}</span>
            <span class="sym"><span class="t">{r.sym}</span></span>
            <span class="last {r.dir}"><span class="t" use:fit={43}>{r.last}{#if r.tail}<span class="green">{r.tail}</span>{/if}</span></span>
            <span class="chg green"><span class="t" use:fit={r.chg.length === 4 ? 33 : 41}>{r.chg}</span></span>
            <span class="pct green"><span class="t" use:fit={44}>{r.pct}</span></span>
          </div>
        {/each}
      </section>

      <section class="detail">
        <div class="detail-head">
          {@render coin('gold', 30)}
          <b class="t" use:fit={23}>X...</b>
          {@render ico('grid')}
          {@render ico('edit')}
          {@render ico('dots')}
        </div>
        <div class="line"><span class="t" use:fit={154}>Gold Spot / U.S. Dollar</span>{@render ico('external')}<span class="bullet">•</span></div>
        <div class="line"><span class="t" use:fit={46}>OANDA</span></div>
        <div class="line kind"><span class="t" use:fit={118}>Commodity • Cfd</span></div>
        <div class="price"><b class="t" use:fit={163}>4,391.<span class="teal">81<sup>5</sup></span></b><span class="t usd" use:fit={26}>USD</span></div>
        <div class="change"><b class="t" use:fit={76}>+14.995</b><b class="t" use:fit={67}>+0.34%</b></div>
        <div class="market"><i></i><span class="t" use:fit={90}>Market open</span></div>
        <div class="news">
          <div class="meta"><b class="t tag" use:fit={37}>News</b><span>•</span><b class="t" use:fit={80}>2 hours ago</b></div>
          <div><span class="t" use:fit={147}>Commodities intraday</span></div>
          <div><span class="t" use:fit={122}>targets/key levels</span></div>
          <div class="more"><span class="t" use:fit={81}>More events</span><svg width="6" height="10" viewBox="0 0 6 10"><path d="M1 1l4 4-4 4" /></svg></div>
        </div>
      </section>
      <span class="handle">{@render ico('handle')}</span>
    </aside>

    <nav class="rail">
      <div class="rail-slot"><span class="mark-on">{@render ico('bookmark')}</span></div>
      <div class="rail-slot">{@render ico('clock')}</div>
      <div class="rail-slot">{@render ico('layers')}</div>
      <div class="rail-slot">{@render ico('chat')}</div>
      <div class="rail-slot lower">{@render ico('radar')}</div>
      <div class="rail-slot">{@render ico('mountain')}</div>
      <div class="rail-slot">{@render ico('calendar')}</div>
      <div class="rail-slot">{@render ico('rss')}</div>
      <div class="rail-slot">{@render ico('bell')}</div>
      <div class="rail-slot">
        <span class="apps">{#each span(1, 9) as n (n)}<i></i>{/each}</span>
      </div>
      <hr />
      <div class="rail-slot help">{@render ico('help')}</div>
    </nav>
  </div>

  <div class="watermark">
    <svg width="28" height="28" viewBox="-14 -14 28 28">
      <path d="M0-13l7 7-3 3-4-4-4 4-3-3zM0 13l7-7-3-3-4 4-4-4-3 3zM0-3l3 3-3 3-3-3zM-10-3l3 3-3 3-3-3zM10-3l3 3-3 3-3-3z" />
    </svg>
    <span class="t" use:fit={231}>@ Người Đồng Hành</span>
  </div>
</div>

<style>
  :global(body) {
    margin: 0;
    background: #37373b;
  }

  .app {
    position: relative;
    width: 1908px;
    height: 923px;
    border: solid #37373b;
    border-width: 2px 0 0 2px;
    border-radius: 10px;
    overflow: hidden;
    background: #e9e9e9;
    color: #131313;
    font-family: 'Noto Sans', 'Open Sans', sans-serif;
    font-size: 16px;
    display: flex;
    flex-direction: column;
    gap: 5px;
  }

  .t {
    display: inline-block;
    white-space: nowrap;
    transform-origin: 0 50%;
  }

  b { font-weight: 600; }

  .ico {
    display: block;
    flex: none;
    overflow: visible;
    fill: none;
    stroke: #1c1c1c;
    stroke-width: 1.4;
  }

  .ico text,
  .ico .dot {
    fill: #1c1c1c;
    stroke: none;
  }

  .coin { display: block; flex: none; }
  .muted .ico { stroke: #8a8a8a; }

  /* Header */
  header {
    height: 46px;
    box-sizing: border-box;
    padding: 0 0 3px 14px;
    background: #fff;
    border-radius: 8px 8px 0 0;
    display: grid;
    align-items: center;
    justify-items: start;
    font-weight: 500;
    grid-template-columns:
      54px 174px 45px 13px 48px 48px 28px 39px 25px 28px 30px 15px 44px 16px 37px 98px 43px 16px
      37px 61px 37px 69px 15px 46px 291px 43px 88px 29px 16px 48px 48px 46px 43px 84px auto;
  }

  .sep {
    width: 1px;
    height: 28px;
    background: #e2e2e2;
  }

  .chev { width: 18px; display: flex; justify-content: center; }

  .avatar {
    position: relative;
    width: 33px;
    height: 33px;
    border-radius: 50%;
    background: #73a065;
    color: #fff;
    font-size: 20px;
    line-height: 33px;
    text-align: center;
  }

  .badge {
    position: absolute;
    left: 23px;
    top: -6px;
    width: 23px;
    height: 22px;
    border-radius: 50%;
    background: #f23645;
    box-shadow: 0 0 0 2px #fff;
    font-size: 13px;
    line-height: 22px;
  }

  .symbol {
    width: 160px;
    height: 35px;
    box-sizing: border-box;
    padding: 0 1px 0 15px;
    border-radius: 18px;
    background: #ebebeb;
    display: flex;
    align-items: center;
    justify-content: space-between;
  }

  .round {
    width: 32px;
    height: 32px;
    border-radius: 50%;
    background: #fff;
    display: grid;
    place-items: center;
  }

  .interval {
    width: 29px;
    height: 42px;
    border-radius: 6px;
    background: #e9e9e9;
    display: grid;
    place-items: center;
  }

  .layout-name {
    width: 74px;
    display: flex;
    flex-direction: column;
    align-items: center;
    line-height: 17px;
  }

  .save {
    color: #2962d8;
    font-size: 12px;
    font-weight: 400;
    line-height: 14px;
  }

  .pill {
    height: 35px;
    padding: 0;
    border-radius: 18px;
    font: inherit;
    display: grid;
    place-items: center;
  }

  .trade { width: 74px; border: 1px solid #e2e2e2; background: #fff; color: #111; }
  .publish { width: 86px; border: 0; background: #2c2c2c; color: #fff; }

  /* Body */
  .body {
    flex: 1;
    min-height: 0;
    display: flex;
  }

  .tools {
    width: 63px;
    margin-right: 5px;
    padding-top: 7px;
    box-sizing: border-box;
    background: #fff;
    border-radius: 0 6px 0 0;
  }

  .slot {
    height: 47.4px;
    padding-right: 2px;
    display: grid;
    place-items: center;
  }

  .slot.last { margin-top: 14px; }

  .hit {
    width: 43px;
    height: 42px;
    border-radius: 7px;
    display: grid;
    place-items: center;
  }

  .on { background: #ebebeb; }
  .dark { background: #2c2c2c; }
  .dark .ico { stroke: #fff; }

  .tools hr {
    width: 45px;
    height: 1px;
    margin: 8px 8px;
    border: 0;
    background: #e2e2e2;
  }

  main {
    position: relative;
    width: 1514px;
    display: flex;
    flex-direction: column;
    gap: 5px;
  }

  .chart {
    position: relative;
    height: 820px;
    background: #fff;
    border-radius: 6px;
    overflow: hidden;
  }

  .plot { display: block; }
  .gridline { stroke: #f0f0f0; }

  .zone {
    fill: #ecd2f0;
    stroke: #8e30a0;
    stroke-width: 2;
  }

  .ma { fill: none; stroke-width: 2.4; stroke-linejoin: round; }
  .ma.thin { stroke-width: 1.5; }
  .draw { fill: none; stroke: #000; stroke-width: 2.6; stroke-linecap: round; }
  .mark { fill: #3a68d4; font-size: 15px; text-anchor: middle; }
  .logo { fill: #0c0c0c; stroke: #fff; stroke-width: 5; paint-order: stroke; stroke-linejoin: round; }
  .prices, .times { font-size: 15px; }
  .times text { text-anchor: middle; }
  .bold { font-weight: 700; }
  .cog { fill: none; stroke: #1c1c1c; stroke-width: 1.4; }

  .legend {
    position: absolute;
    left: 11px;
    top: 6px;
  }

  .title {
    height: 28px;
    display: flex;
    align-items: center;
    background: #fff;
    font-size: 16px;
  }

  .title > .t + .t { margin-left: 8px; }
  .title > .name { margin-left: 4px; font-size: 19px; }

  .status {
    width: 10px;
    height: 10px;
    margin: 0 10px;
    border: 6px solid #d8ecf0;
    border-radius: 50%;
    background: #0b7c70;
  }

  .trade-row {
    margin-top: 6px;
    display: flex;
    align-items: center;
  }

  .quote {
    width: 96px;
    height: 41px;
    border: 1px solid;
    border-radius: 6px;
    background: #fff;
    display: flex;
    flex-direction: column;
    align-items: center;
    line-height: 17px;
    font-size: 14px;
  }

  .quote b { margin-top: 2px; font-size: 16px; line-height: 19px; }
  .quote sup { font-weight: 400; font-size: 15px; line-height: 0; vertical-align: 2px; }
  .sell { color: #cf3f4a; }
  .buy { color: #2d5fd3; }
  .spread { margin-left: 10px; font-size: 13.5px; }
  .spread + .buy { margin-left: 10px; }

  .collapsed {
    width: 37px;
    height: 24px;
    margin-top: 7px;
    border: 1px solid #d8d8d8;
    border-radius: 3px;
    background: #fff;
    display: flex;
    align-items: center;
    font-size: 16px;
  }

  .collapsed .ico { margin: 0 -4px 0 -1px; stroke-width: 1.7; }

  .ranges {
    height: 47px;
    padding: 0 13px 0 18px;
    border-top: 1px solid #e4e4e4;
    display: flex;
    align-items: center;
    gap: 15px;
  }

  .ranges .sep { margin: 0 -1px 0 -2px; }
  .ranges .clock { margin-left: auto; }

  .bottom {
    height: 45px;
    padding: 0 10px 0 20px;
    background: #fff;
    border-radius: 6px 6px 0 0;
    display: flex;
    align-items: center;
    font-weight: 500;
  }

  .strategy { margin-right: 15px; }
  .bottom .muted { margin-left: 5px; }
  .right { margin-left: auto; display: flex; gap: 16px; }

  .floating {
    position: absolute;
    left: 1065px;
    top: 8px;
    width: 410px;
    height: 47px;
    padding-left: 10px;
    box-sizing: border-box;
    border-radius: 8px;
    background: #fff;
    box-shadow: 0 2px 5px rgba(0, 0, 0, 0.25);
    display: flex;
    align-items: center;
    gap: 19.6px;
  }

  .grip { fill: #a8a8a8; }

  /* Watchlist */
  .side {
    position: relative;
    width: 263px;
    margin-left: 6px;
    display: flex;
    flex-direction: column;
    gap: 5px;
  }

  .watch {
    height: 468px;
    overflow: hidden;
    background: #fff;
    border-radius: 6px 0 0 0;
  }

  .watch-head {
    height: 58px;
    padding-left: 20px;
    display: flex;
    align-items: center;
  }

  .watch-head .ico { margin-left: 1px; }
  .watch-head .ico:nth-of-type(1) { margin-right: 12px; }
  .watch-head .ico:nth-of-type(2) { margin-right: 18px; }
  .watch-head .ico:nth-of-type(3) { margin-right: 19px; }

  .row {
    height: 36.5px;
    border-bottom: 1px solid #ececec;
    display: grid;
    grid-template-columns: 20px 30px 26px 53px 39px 75px;
    align-items: center;
    font-size: 17px;
  }

  .row > .last { width: 43px; overflow: hidden; }
  .row > .chg { overflow: hidden; text-align: right; }
  .sym { width: 16px; overflow: hidden; }
  .sym .t { transform: scaleX(0.88); }
  .pct { text-align: right; }
  .red { color: #d8404c; }
  .green { color: #2f9e8c; }

  .row.cols {
    height: 35px;
    color: #707070;
    grid-template-columns: 20px 70px 53px 25px 75px;
  }

  .row.cols > .last { width: 28px; }
  .row.cols > .chg { text-align: left; }
  .sym-head { width: 28px; overflow: hidden; }
  .sym-head .t, .cols .last .t, .cols .chg .t { transform: scaleX(0.92); }

  .flag {
    width: 14px;
    height: 16px;
    clip-path: polygon(0 0, 100% 0, 75% 50%, 100% 100%, 0 100%);
  }

  .flag.green { background: #81c784; }
  .flag.grey { background: #d8d8d8; }

  .row.active {
    height: 32px;
    margin-bottom: 1.5px;
    border: 2px solid #2c2c2c;
    border-radius: 7px;
  }

  .active > * { position: relative; left: -2px; }

  .group {
    height: 35.5px;
    padding: 17.5px 0 0 17px;
    color: #757575;
    font-size: 14px;
    display: flex;
    align-items: center;
    gap: 8px;
  }

  .group .ico { stroke: #757575; }

  /* Symbol details */
  .detail {
    flex: 1;
    padding: 0 20px;
    background: #fff;
  }

  .detail-head {
    height: 59px;
    display: flex;
    align-items: center;
    font-size: 17px;
  }

  .detail-head b { margin-left: 10px; }
  .detail-head .ico { margin-left: 20px; }
  .detail-head b + .ico { margin-left: 37px; }

  .line {
    height: 27.5px;
    display: flex;
    align-items: center;
    font-size: 15px;
  }

  .line .ico { margin: 0 -1px; stroke: #8a8a8a; }
  .bullet { color: #999; }
  .kind { height: 27px; color: #9a9a9a; }

  .price {
    height: 60px;
    display: flex;
    align-items: baseline;
    gap: 7px;
    font-size: 35px;
    line-height: 74px;
  }

  .price b { font-weight: 700; }
  .price sup { font-size: 26px; line-height: 0; vertical-align: 6px; }
  .price .usd { font-size: 14px; position: relative; top: -2px; }
  .teal { color: #17796c; }

  .change {
    height: 26px;
    color: #17796c;
    display: flex;
    align-items: center;
    gap: 12px;
    font-size: 18px;
  }

  .market {
    height: 26px;
    padding-left: 6px;
    color: #2f9583;
    display: flex;
    align-items: center;
    gap: 6px;
    font-size: 16px;
  }

  .market i {
    width: 10px;
    height: 10px;
    border-radius: 50%;
    background: #089981;
  }

  .news {
    height: 102px;
    margin-top: 16px;
    padding: 10px 15px 0;
    border-radius: 12px;
    background: #e6e0f2;
    font-size: 15px;
    line-height: 20px;
  }

  .meta { margin-bottom: 5px; color: #757575; display: flex; gap: 7px; }
  .meta span { color: #888; font-size: 12px; }
  .meta .tag { color: #413399; }

  .more {
    margin-top: 5px;
    color: #757575;
    display: flex;
    align-items: center;
    gap: 6px;
  }

  .more path { fill: none; stroke: #757575; stroke-width: 1.3; }

  .handle {
    position: absolute;
    left: -3px;
    top: 766px;
    width: 8px;
    height: 31px;
    border: 1px solid #dedede;
    border-radius: 5px;
    background: #fff;
    display: flex;
    align-items: center;
    justify-content: center;
  }

  .handle .ico { stroke: #999; }

  /* Right rail */
  .rail {
    flex: 1;
    padding-top: 1px;
    background: #fff;
    border-left: 1px solid #e4e4e4;
    display: flex;
    flex-direction: column;
    align-items: center;
  }

  .rail-slot {
    height: 57px;
    display: grid;
    place-items: center;
  }

  .rail-slot.lower { margin-top: 230px; }
  .rail-slot.lower ~ .rail-slot { height: 56.2px; }

  .mark-on {
    width: 48px;
    height: 47px;
    border-radius: 9px;
    background: #ebebeb;
    display: grid;
    place-items: center;
  }

  .apps {
    width: 42px;
    height: 42px;
    box-sizing: border-box;
    padding: 10px;
    border-radius: 50%;
    background: #2c2c2c;
    display: grid;
    grid-template-columns: repeat(3, 5px);
    gap: 4px;
    place-content: center;
  }

  .apps i { width: 5px; height: 5px; border-radius: 1px; background: #fff; }

  .rail hr {
    width: 42px;
    height: 1px;
    margin: 7px 0 6px;
    border: 0;
    background: #e0e0e0;
  }

  .watermark {
    position: absolute;
    left: 1635px;
    top: 879px;
    display: flex;
    align-items: center;
    gap: 6px;
    color: rgba(255, 255, 255, 0.9);
    font-size: 23px;
    line-height: 34px;
    text-shadow: 1px 1px 1px #999, 0 0 2px #aaa;
  }

  .watermark svg {
    fill: #fff;
    filter: drop-shadow(1px 1px 1px #999);
  }
</style>
